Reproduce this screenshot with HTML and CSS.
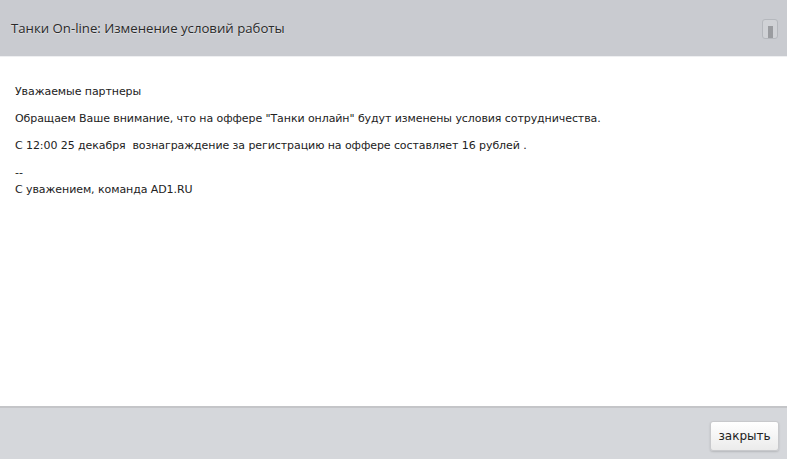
FILE: index.html
```html
<!DOCTYPE html>
<html lang="ru">
<head>
    <meta charset="UTF-8">
    <title>Танки On-line: Изменение условий работы</title>
    <link rel="stylesheet" href="styles.css">
</head>
<body>
    <div class="dialog">
        <div class="dialog-head">
            <span class="dialog-title">Танки On-line: Изменение условий работы</span>
            <span class="scroll-knob"><span class="scroll-bar"></span></span>
        </div>

        <div class="dialog-body">
            <p>Уважаемые партнеры</p>
            <p>Обращаем Ваше внимание, что на оффере "Танки онлайн" будут изменены условия сотрудничества.</p>
            <p>С 12:00 25 декабря &nbsp;вознаграждение за регистрацию на оффере составляет 16 рублей .</p>
            <p>--<br>С уважением, команда AD1.RU</p>
        </div>

        <div class="dialog-foot">
            <button class="btn">закрыть</button>
        </div>
    </div>
</body>
</html>
```

FILE: styles.css
```css
html, body {
    margin: 0;
    height: 100%;
}
body {
    font-family: "DejaVu Sans", Tahoma, sans-serif;
    font-size: 11px;
    color: #222;
    background: #fff;
}
.dialog {
    display: flex;
    flex-direction: column;
    height: 459px;
}
.dialog-head {
    height: 56px;
    background: #c9cbd0;
    border-bottom: 1px solid #eeeff1;
    display: flex;
    align-items: center;
    justify-content: space-between;
    padding: 0 9px 0 11px;
}
.dialog-title {
    font-family: "Open Sans", sans-serif;
    font-size: 13.2px;
    color: #2a2a2a;
    text-shadow: 0 1px 1px rgba(255,255,255,0.5);
}
.scroll-knob {
    width: 14px;
    height: 18px;
    border: 1px solid #b5b8bd;
    border-radius: 3px;
    background: #d0d2d6;
    display: flex;
    justify-content: center;
    align-items: flex-end;
    margin-top: 2px;
}
.scroll-bar {
    width: 5px;
    height: 12px;
    background: #9a9ca0;
}
.dialog-body {
    flex: 1;
    padding: 26px 15px 0;
}
.dialog-body p {
    margin: 0 0 10px;
    line-height: 17px;
    letter-spacing: -0.08px;
}
.dialog-foot {
    height: 51px;
    border-top: 2px solid #c4c5c8;
    background: #d5d7db;
    display: flex;
    align-items: center;
    justify-content: flex-end;
    padding: 0 8px;
}
.btn {
    font-family: "DejaVu Sans", Tahoma, sans-serif;
    font-size: 12px;
    color: #222;
    width: 69px;
    height: 30px;
    padding: 0;
    border: 1px solid #c8c9cc;
    border-radius: 3px;
    background: linear-gradient(#ffffff, #ebebeb);
    box-shadow: 0 1px 2px rgba(0,0,0,0.15);
    margin-top: 4px;
}
```
